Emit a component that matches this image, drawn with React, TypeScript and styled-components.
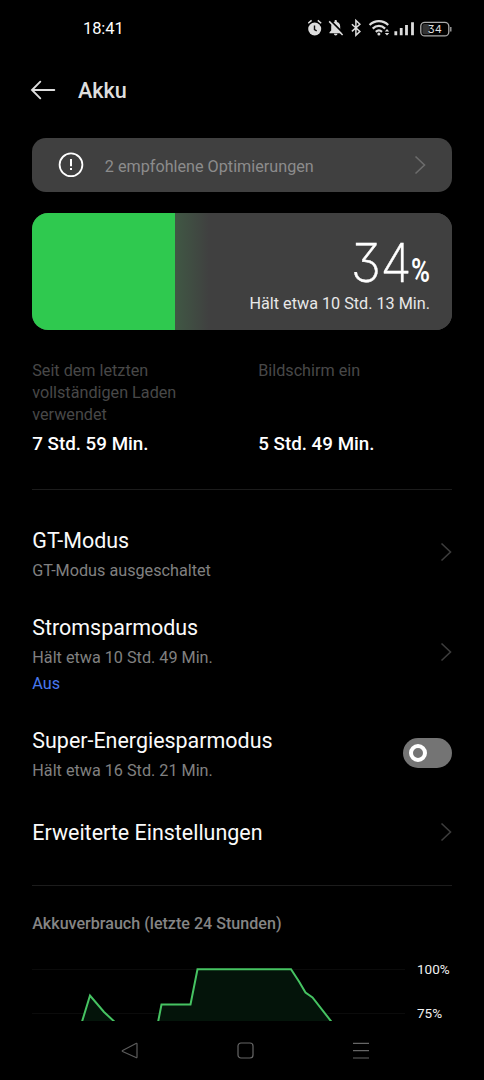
import React from 'react';
import styled, { createGlobalStyle } from 'styled-components';

const GlobalStyle = createGlobalStyle`
  * { box-sizing: border-box; }
  body { margin: 0; background: #000; font-family: Roboto, "Noto Sans", sans-serif; }
  p, h1, h2, h3 { margin: 0; font-weight: 400; }
  svg { display: block; flex: none; }
  button { background: none; border: 0; padding: 0; }
`;

const Screen = styled.div`
  width: 484px;
  height: 1080px;
  background: #000;
  color: #f2f2f2;
  display: flex;
  flex-direction: column;
  overflow: hidden;
  white-space: nowrap;
`;

const StatusBar = styled.div`
  height: 56px;
  padding: 0 30px 0 83px;
  display: flex;
  align-items: center;
  justify-content: space-between;
`;

const Clock = styled.span`
  padding-top: 2px;
  font-size: 16.5px;
  line-height: 20px;
  letter-spacing: -0.1px;
  color: #fff;
`;

const Header = styled.header`
  height: 82px;
  padding: 6px 30px 20px;
  display: flex;
  align-items: center;
  gap: 22px;
`;

const PageTitle = styled.h1`
  padding-top: 2px;
  font-size: 21.6px;
  font-weight: 500;
  line-height: 26px;
  color: #dedede;
`;

const Content = styled.main`
  padding: 0 32px;
  height: 883px;
  overflow: hidden;
  display: flex;
  flex-direction: column;
  flex: none;
`;

const Tip = styled.button`
  height: 54px;
  flex: none;
  padding: 0 26px;
  border-radius: 14px;
  background: #404040;
  display: flex;
  align-items: center;
`;

const TipLabel = styled.span`
  flex: 1;
  padding: 3px 0 0 20.8px;
  text-align: left;
  font: 400 16.2px/20px Roboto, sans-serif;
  color: #8c8c8c;
`;

const BatteryCard = styled.section`
  height: 117px;
  flex: none;
  margin-top: 21.4px;
  border-radius: 16px;
  overflow: hidden;
  background: #404040;
  display: flex;
`;

const BatteryLevel = styled.div`
  width: 143px;
  background: #2fc94f;
`;

const BatteryInfo = styled.div`
  flex: 1;
  padding: 24px 22px 0 0;
  background: linear-gradient(90deg, #405844 0, #404040 34px);
  display: flex;
  flex-direction: column;
  align-items: flex-end;
  color: #fff;
`;

const Percent = styled.div`
  height: 56px;
  display: flex;
  align-items: baseline;
  line-height: 52px;
`;

const PercentValue = styled.span`
  margin-right: -0.6px;
  font-family: Inter, sans-serif;
  font-size: 54px;
  font-weight: 200;
  font-feature-settings: "cv09" 1;
  letter-spacing: -0.5px;
  transform: scaleX(0.94);
  transform-origin: right;
  -webkit-text-stroke: 0.4px #fff;
`;

const PercentSign = styled.span`
  width: 19px;
  font-size: 33px;
  font-weight: 600;
  transform: scaleX(0.78);
  transform-origin: left;
`;

const Remaining = styled.p`
  font-size: 16.2px;
  line-height: 22px;
  color: #e8e8e8;
`;

const Stats = styled.section`
  display: grid;
  grid-template-columns: 226px 1fr;
  margin-top: 29.6px;
  padding-left: 0.2px;
  height: 129px;
  flex: none;
`;

const Stat = styled.div`
  display: flex;
  flex-direction: column;
`;

const StatLabel = styled.p`
  width: 160px;
  height: 66px;
  font-size: 16.2px;
  line-height: 22px;
  color: #484848;
  white-space: normal;
`;

const StatValue = styled.p`
  margin-top: 6px;
  font-size: 18.8px;
  font-weight: 500;
  line-height: 24px;
  color: #fff;
`;

const Divider = styled.hr`
  width: 100%;
  height: 1px;
  flex: none;
  margin: 0;
  border: 0;
  background: #1c1c1c;
`;

const SettingsList = styled.section`
  padding: 38px 0 0 0.3px;
  height: 395px;
  flex: none;
`;

const Setting = styled.div<{ $height: number }>`
  height: ${(p) => p.$height}px;
  display: flex;
  justify-content: space-between;
`;

const SettingTitle = styled.h2`
  font-size: 21.45px;
  line-height: 26px;
  color: #fafafa;
`;

const SettingNote = styled.p`
  margin-top: 6px;
  font-size: 16.2px;
  line-height: 22px;
  color: #808080;
`;

const SettingState = styled(SettingNote)`
  margin-top: 4px;
  color: #4879ee;
`;

const Control = styled.div<{ $top: number }>`
  padding-top: ${(p) => p.$top}px;
`;

const Switch = styled.div`
  width: 49px;
  height: 30px;
  border-radius: 15px;
  padding: 6px;
  background: #747474;
`;

const SwitchKnob = styled.div`
  width: 18px;
  height: 18px;
  border: 4px solid #fff;
  border-radius: 50%;
`;

const ChartTitle = styled.h3`
  margin: 28px 0 0 0.2px;
  font-size: 16.1px;
  font-weight: 500;
  line-height: 20px;
  color: #858585;
`;

const Chart = styled.div`
  margin-top: 26px;
  display: flex;
  gap: 12px;
`;

const ChartScale = styled.div`
  display: flex;
  flex-direction: column;
  gap: 26px;
  font-size: 13.5px;
  line-height: 18px;
  color: #f0f0f0;
`;

const NavBar = styled.nav`
  height: 59px;
  flex: none;
  padding: 0 114px 0 120px;
  display: flex;
  align-items: center;
  justify-content: space-between;
`;

const Chevron = ({ color = '#3c3c3c' }: { color?: string }) => (
  <svg width="12" height="20" viewBox="0 0 12 20" fill="none" stroke={color} strokeWidth="1.6">
    <path d="M1.5 1.5 10.5 10 1.5 18.5" />
  </svg>
);

const BatteryText = styled.text`
  font-family: Inter, sans-serif;
  font-size: 11px;
  font-feature-settings: "cv09" 1;
  fill: #ddd;
  stroke: none;
`;

const StatusIcons = () => (
  <svg width="146" height="20" viewBox="0 0 146 20" fill="none" stroke="#ddd">
    <circle cx="6.7" cy="11" r="6.5" fill="#ddd" stroke="none" />
    <path d="M0.2 5.3 3.6 2.4M13.2 5.3 9.8 2.4" strokeWidth="1.5" />
    <path d="M6.5 7.5v4l2.2 1.3" stroke="#111" strokeWidth="1.4" />
    <path
      d="M21.5 15.3v-1l1.7-1.7V8.5c0-2.6 1.4-4 3.3-4.6v-.8c0-.8.5-1.2 1.2-1.2s1.2.4 1.2 1.2v.8c2 .6 3.3 2 3.3 4.6v4.1l1.7 1.7v1zM26 15.8h3.4c0 1-.7 1.7-1.7 1.7s-1.7-.7-1.7-1.7z"
      fill="#ddd"
      stroke="none"
    />
    <path d="M22.1 2.2 35.5 15.5" stroke="#000" strokeWidth="1.8" />
    <path d="M21.2 3.4 34.6 17" strokeWidth="1.5" />
    <path d="m43.9 6.2 8 7.2-4 3.8V2.4l4 3.8-8 7.2" strokeWidth="1.5" />
    <path d="M61.6 7c5.2-5.2 13.4-5.2 18.6 0M64.7 10.6c3.6-3.6 8.8-3.6 12.4 0M67.8 13.9c2-1.9 4.2-1.9 6.2 0" strokeWidth="2.2" />
    <circle cx="70.9" cy="16" r="1.5" fill="#ddd" stroke="none" />
    <path d="m76.8 13.4 2.2-2.5 2.2 2.5zM76.8 15l2.2 2.5 2.2-2.5z" fill="#ddd" stroke="none" />
    <path d="M87.8 17.3v-4M93.2 17.3v-7.2M98.5 17.3V7M104.5 17.3V4.3" strokeWidth="2.8" />
    <rect x="112.8" y="4.3" width="28" height="13.6" rx="4" stroke="#aaa" strokeWidth="1.3" />
    <path d="M116.4 6h5.3v10.2h-5.3a2 2 0 0 1-2-2V8a2 2 0 0 1 2-2z" fill="#333" stroke="none" />
    <path d="M142.8 9v4.5" stroke="#aaa" strokeWidth="1.3" />
    <BatteryText x="126.8" y="15" textAnchor="middle">34</BatteryText>
  </svg>
);

export default function App() {
  return (
    <>
      <GlobalStyle />
      <Screen>
        <StatusBar>
          <Clock>18:41</Clock>
          <StatusIcons />
        </StatusBar>
        <Header>
          <svg width="26" height="20" viewBox="0 0 26 20" fill="none" stroke="#dedede" strokeWidth="1.9" strokeLinecap="round">
            <path d="M24.3 10H2M10.3 1.7 2 10l8.3 8.3" />
          </svg>
          <PageTitle>Akku</PageTitle>
        </Header>
        <Content>
          <Tip>
            <svg width="26" height="26" viewBox="0 0 26 26" fill="none" stroke="#fff">
              <circle cx="13" cy="12.8" r="11.4" strokeWidth="1.8" />
              <path d="M13 7v7.2M13 16v2" strokeWidth="2" />
            </svg>
            <TipLabel>2 empfohlene Optimierungen</TipLabel>
            <Chevron color="#6c6c6c" />
          </Tip>
          <BatteryCard>
            <BatteryLevel />
            <BatteryInfo>
              <Percent>
                <PercentValue>34</PercentValue>
                <PercentSign>%</PercentSign>
              </Percent>
              <Remaining>Hält etwa 10 Std. 13 Min.</Remaining>
            </BatteryInfo>
          </BatteryCard>
          <Stats>
            <Stat>
              <StatLabel>Seit dem letzten vollständigen Laden verwendet</StatLabel>
              <StatValue>7 Std. 59 Min.</StatValue>
            </Stat>
            <Stat>
              <StatLabel>Bildschirm ein</StatLabel>
              <StatValue>5 Std. 49 Min.</StatValue>
            </Stat>
          </Stats>
          <Divider />
          <SettingsList>
            <Setting $height={87}>
              <div>
                <SettingTitle>GT-Modus</SettingTitle>
                <SettingNote>GT-Modus ausgeschaltet</SettingNote>
              </div>
              <Control $top={14}><Chevron /></Control>
            </Setting>
            <Setting $height={113}>
              <div>
                <SettingTitle>Stromsparmodus</SettingTitle>
                <SettingNote>Hält etwa 10 Std. 49 Min.</SettingNote>
                <SettingState>Aus</SettingState>
              </div>
              <Control $top={27}><Chevron /></Control>
            </Setting>
            <Setting $height={92}>
              <div>
                <SettingTitle>Super-Energiesparmodus</SettingTitle>
                <SettingNote>Hält etwa 16 Std. 21 Min.</SettingNote>
              </div>
              <Control $top={10}><Switch><SwitchKnob /></Switch></Control>
            </Setting>
            <Setting $height={40}>
              <SettingTitle>Erweiterte Einstellungen</SettingTitle>
              <Control $top={2}><Chevron /></Control>
            </Setting>
          </SettingsList>
          <Divider />
          <ChartTitle>Akkuverbrauch (letzte 24 Stunden)</ChartTitle>
          <Chart>
            <svg width="373" height="63" viewBox="0 0 373 63" fill="none">
              <path d="M0 9.5h373M0 53.5h373" stroke="#0b0b0b" />
              <path
                d="M49 65 58 35 72 52 86 65ZM124 65 129.5 44.5H158.5L165.5 9.2H259L267 22 273 32.5 281 38 302 65Z"
                fill="#04140a"
              />
              <path
                d="M49 65 58 35.5 72 52 86 65M125.5 65 129.5 44.5H158.5L165.5 9.2H259L267 21.5 273.5 32.5 280.5 37.5 302 65"
                stroke="#46c362"
                strokeWidth="2"
              />
            </svg>
            <ChartScale>
              <span>100%</span>
              <span>75%</span>
            </ChartScale>
          </Chart>
        </Content>
        <NavBar>
          <svg width="20" height="20" viewBox="0 0 20 20" fill="none" stroke="#5c5c5c" strokeWidth="1.2" strokeLinejoin="round">
            <path d="M2.6 9.5 16 2.5Q17 2 17 3v13q0 1-1 .5L2.6 10.5q-.8-.5 0-1Z" />
          </svg>
          <svg width="18" height="18" viewBox="0 0 18 18" fill="none" stroke="#666" strokeWidth="1.2">
            <rect x="1" y="1" width="15" height="15" rx="3" />
          </svg>
          <svg width="18" height="18" viewBox="0 0 18 18" fill="none" stroke="#666" strokeWidth="1.2">
            <path d="M1 1.4h16M1 8.6h16M1 16h16" />
          </svg>
        </NavBar>
      </Screen>
    </>
  );
}
